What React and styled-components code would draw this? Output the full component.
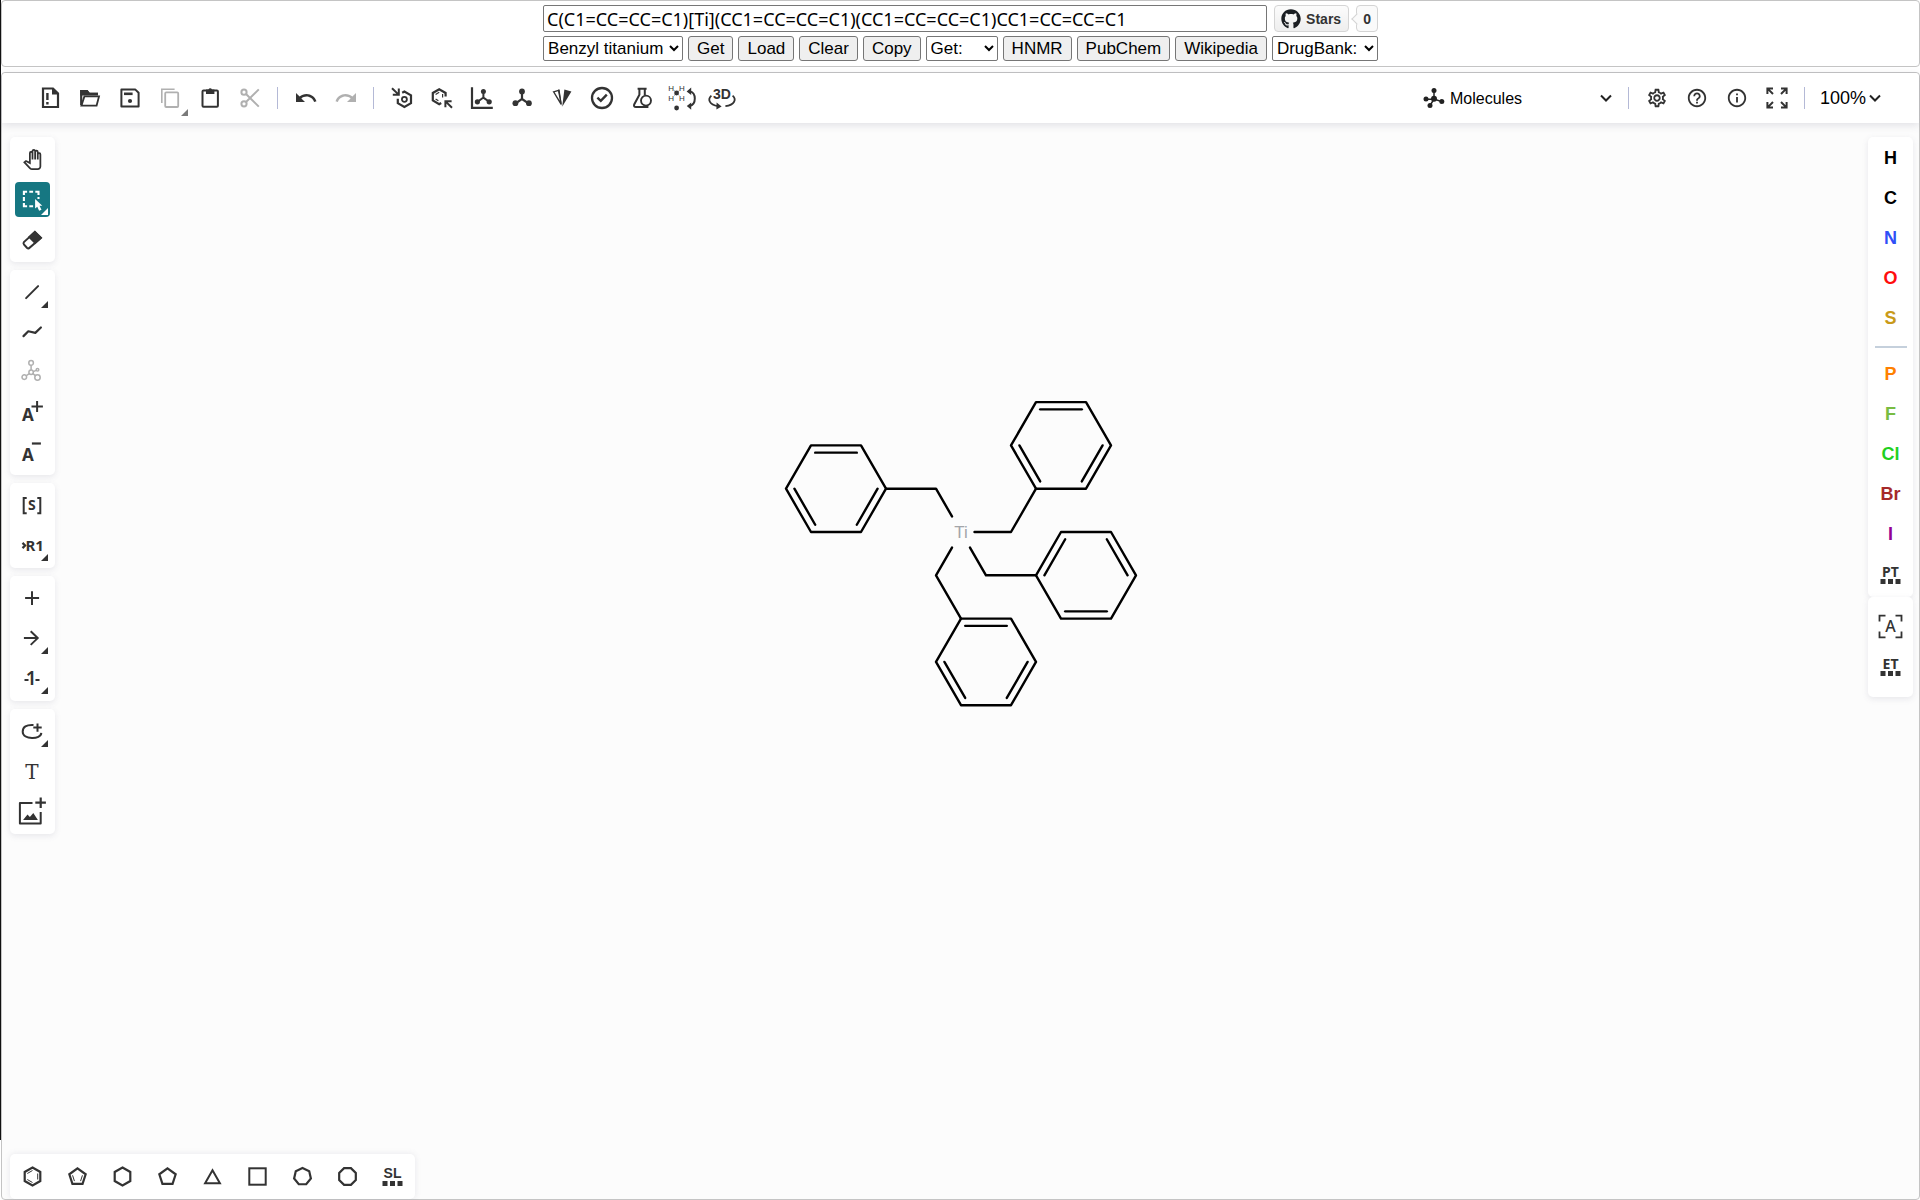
import { useState } from "react";
import styled, { createGlobalStyle } from "styled-components";
import {
  MdHelpOutline,
  MdInfoOutline,
  MdOutlinePanTool,
  MdOutlineSettings,
} from "react-icons/md";
import { FaGithub } from "react-icons/fa";

const ink = "#333333";

const GlobalStyle = createGlobalStyle`
  * {
    box-sizing: border-box;
  }

  body {
    margin: 0;
    background: #ffffff;
    font-family: "Liberation Sans", Arial, sans-serif;
  }
`;

const Page = styled.div`
  display: flex;
  flex-direction: column;
  gap: 5px;
  min-height: 100vh;
  padding-left: 1px;
  background: linear-gradient(#111111, #111111) left top / 1px calc(100% - 60px)
    no-repeat;
`;

const Frame = styled.div`
  display: flex;
  flex-direction: column;
  flex-grow: ${(props) => (props.$grow ? 1 : 0)};
  border: 1px solid #c4c4c4;
  border-radius: 4px;
  background: ${(props) => (props.$grow ? "#fcfcfc" : "#ffffff")};
`;

/* ---------- form above the editor ---------- */

const Form = styled.form`
  display: flex;
  flex-direction: column;
  gap: 4px;
  align-self: center;
  padding: 4px 0 5px;
`;

const FormRow = styled.div`
  display: flex;
  align-items: center;
  gap: 5px;
`;

const SmilesInput = styled.input`
  flex: 1;
  height: 27px;
  padding: 0 3px;
  border: 1px solid #767676;
  border-radius: 2px;
  font-family: "Noto Sans", sans-serif;
  font-size: 18px;
`;

const FormButton = styled.button`
  height: 25px;
  padding: 0 8px;
  border: 1px solid #767676;
  border-radius: 3px;
  background: #efefef;
  color: #000000;
  font-family: inherit;
  font-size: 17px;
  line-height: 20px;
`;

const FormSelect = styled.select`
  width: ${(props) => props.$width}px;
  height: 25px;
  border: 1px solid #767676;
  border-radius: 2px;
  background-color: #ffffff;
  color: #000000;
  font-family: inherit;
  font-size: 17px;
`;

const Github = styled.div`
  display: flex;
  gap: 7px;
  padding-left: 2px;
`;

const GithubLink = styled.a`
  display: flex;
  align-items: center;
  gap: 5px;
  height: 27px;
  padding: 0 7px 0 6px;
  border: 1px solid #d5d5d5;
  border-radius: 4px;
  background: linear-gradient(#fcfcfc, #eeeeee);
  color: #333333;
  font-size: 14px;
  font-weight: bold;
  text-decoration: none;
`;

const GithubCount = styled.a`
  position: relative;
  display: flex;
  align-items: center;
  height: 27px;
  padding: 0 6px;
  border: 1px solid #d4d4d4;
  border-radius: 4px;
  background: #fafafa;
  color: #333333;
  font-size: 14px;
  font-weight: bold;
  text-decoration: none;

  &::before {
    content: "";
    position: absolute;
    left: -4px;
    top: 9px;
    width: 7px;
    height: 7px;
    border-left: 1px solid #d4d4d4;
    border-bottom: 1px solid #d4d4d4;
    background: #fafafa;
    transform: rotate(45deg);
  }
`;

/* ---------- editor ---------- */

const TopBar = styled.header`
  display: flex;
  align-items: center;
  gap: 4px;
  height: 50px;
  padding: 0 37px 0 30px;
  border-radius: 4px 4px 0 0;
  background: #ffffff;
  box-shadow: 0 2px 8px rgba(103, 104, 132, 0.2);
`;

const Divider = styled.span`
  width: 1px;
  height: 22px;
  margin: 0 6px 0 5px;
  background: #b4b9d6;
`;

const ToolButton = styled.button`
  position: relative;
  display: flex;
  align-items: center;
  justify-content: center;
  width: ${(props) => (props.$top ? 36 : 35)}px;
  height: ${(props) => (props.$top ? 36 : 35)}px;
  padding: 0;
  border: none;
  border-radius: 4px;
  background: ${(props) => (props.$active ? "#167782" : "transparent")};
  color: ${(props) => (props.$active ? "#ffffff" : ink)};

  &:disabled {
    color: #b0b0b0;
  }
`;

const Corner = styled.span`
  position: absolute;
  right: ${(props) => (props.$top ? 0 : 2)}px;
  bottom: ${(props) => (props.$top ? 0 : 2)}px;
  width: 7px;
  height: 7px;
  background: ${(props) => (props.$top ? "#7a7a7a" : "currentColor")};
  clip-path: polygon(100% 0, 100% 100%, 0 100%);
`;

const PickerWrap = styled.div`
  display: flex;
  align-items: center;
  gap: ${(props) => (props.$mode ? 3 : 0)}px;
  margin: ${(props) => (props.$mode ? "0 6px 0 auto" : "0 0 0 5px")};
  color: #222222;
`;

const PickerSelect = styled.select`
  width: ${(props) => (props.$mode ? 146 : 48)}px;
  padding: 0;
  border: none;
  appearance: none;
  background: transparent;
  color: #000000;
  font-family: inherit;
  font-size: ${(props) => (props.$mode ? 16 : 18)}px;
`;

const Workspace = styled.div`
  display: flex;
  flex: 1;
  padding: 0 6px 0 8px;
`;

const LeftColumn = styled.nav`
  display: flex;
  flex-direction: column;
  gap: 8px;
  padding-top: 14px;
`;

const Panel = styled.div`
  display: flex;
  flex-direction: column;
  gap: 5px;
  padding: 5px;
  border-radius: 5px;
  background: #ffffff;
  box-shadow: 0 2px 6px rgba(103, 104, 132, 0.14);
`;

const Canvas = styled.main`
  display: flex;
  flex: 1;
  justify-content: center;
  align-items: flex-start;
  padding: 276px 2px 0 0;
`;

const RightColumn = styled.nav`
  display: flex;
  flex-direction: column;
  padding-top: 14px;
`;

const AtomPanel = styled(Panel)`
  padding: 4px 5px 5px;
`;

const ExtraPanel = styled(Panel)`
  padding: 12px 5px 13px;
`;

const AtomButton = styled(ToolButton)`
  color: ${(props) => props.$color};
  font-family: inherit;
  font-size: 18px;
  font-weight: bold;
`;

const AtomRule = styled.hr`
  width: 32px;
  height: 2px;
  margin: 5px auto 4px;
  border: none;
  background: #c5d0dc;
`;

const TemplateBar = styled.footer`
  display: flex;
  align-self: flex-start;
  gap: 10px;
  height: 45px;
  margin-left: 8px;
  padding: 5px;
  border-radius: 5px;
  background: #ffffff;
  box-shadow: 0 0 6px rgba(103, 104, 132, 0.14);
`;

// every drawing has its origin in the middle of the icon
function Icon({ size = 31, children }) {
  return (
    <svg
      width={size}
      height={size}
      viewBox={`${-size / 2} ${-size / 2} ${size} ${size}`}
      fill="none"
      stroke="currentColor"
      strokeWidth="2"
      overflow="visible"
      aria-hidden="true"
    >
      {children}
    </svg>
  );
}

function Label({ x = 0, y, size, weight = "bold", family = "Noto Sans", children }) {
  return (
    <text
      x={x}
      y={y}
      fontSize={size}
      fontWeight={weight}
      fontFamily={`"${family}", sans-serif`}
      textAnchor="middle"
      fill="currentColor"
      stroke="none"
    >
      {children}
    </text>
  );
}

function ring(n, r, start = -90, cx = 0, cy = 0) {
  return Array.from({ length: n }, (_, i) => {
    const angle = ((start + (360 / n) * i) * Math.PI) / 180;
    return [cx + r * Math.cos(angle), cy + r * Math.sin(angle)];
  });
}

const toPoints = (list) => list.map((p) => p.join(",")).join(" ");

function Shape({ n, r, start, cx, cy, width = 2.2 }) {
  return <polygon points={toPoints(ring(n, r, start, cx, cy))} strokeWidth={width} />;
}

// short lines inside a ring, one for each double bond
function InnerBonds({ n, r, start, cx = 0, cy = 0, edges, width = 1 }) {
  const inner = ring(n, r, start, cx, cy);
  return edges.map((e) => (
    <line
      key={e}
      x1={inner[e][0]}
      y1={inner[e][1]}
      x2={inner[(e + 1) % n][0]}
      y2={inner[(e + 1) % n][1]}
      strokeWidth={width}
    />
  ));
}

function Blocks() {
  return (
    <path d="M-10 4.5h5v5h-5zM-2.5 4.5h5v5h-5zM5 4.5h5v5h-5z" fill="currentColor" stroke="none" />
  );
}

function Chevron() {
  return (
    <svg width="14" height="12" viewBox="0 0 14 12" fill="none" stroke="currentColor" strokeWidth="2">
      <path d="M2 3.5l5 5 5-5" />
    </svg>
  );
}

const icons = {
  clear: (
    <>
      <path d="M-7 -9.5H3L8 -4.5V9H-7z" strokeWidth="2.2" />
      <path d="M2 -10V-3.5H8.5z" fill="currentColor" stroke="none" />
      <path d="M-2.6 -5V2M-2.6 4V6.4" strokeWidth="2.4" />
    </>
  ),
  open: (
    <>
      <path d="M-8.8 7V-6.8H-3L-1 -4.2H8" strokeWidth="2.2" />
      <path d="M-9.8 -7.9H-2.6L-.2 -5.2H8V-2.6H-9.8z" fill="currentColor" stroke="none" />
      <path d="M-5.6 -1.6H9L6.6 7.6H-8.6z" strokeWidth="1.8" />
    </>
  ),
  save: (
    <>
      <path d="M-8.6 -8.4H5.4L8.6 -5.2V8.6H-8.6z" strokeLinejoin="round" />
      <path d="M-6 -4.2H2.6" strokeWidth="2.6" />
      <circle cx="0" cy="3" r="2.1" fill="currentColor" stroke="none" />
    </>
  ),
  copy: (
    <>
      <path d="M-8.2 5V-8.8H4.6" strokeWidth="1.6" />
      <rect x="-4.8" y="-5.6" width="13" height="14.6" strokeWidth="1.8" rx="1" />
    </>
  ),
  paste: (
    <>
      <rect x="-7.5" y="-7.6" width="15.4" height="16.4" rx="1" />
      <path d="M-4 -8.6H-1.6A2 2 0 0 1 2 -8.6H4.4V-4H-4z" fill="currentColor" stroke="none" />
    </>
  ),
  cut: (
    <>
      <circle cx="-6" cy="-5.8" r="2.6" />
      <circle cx="-6" cy="5.8" r="2.6" />
      <path d="M-4 -4L8.8 8.6M-4 4L8.8 -8.6" />
    </>
  ),
  undo: (
    <path
      transform="translate(-12 -12)"
      d="M12.5 8c-2.65 0-5.05.99-6.9 2.6L2 7v9h9l-3.62-3.62c1.39-1.16 3.16-1.88 5.12-1.88 3.54 0 6.55 2.31 7.6 5.5l2.37-.78C21.08 11.03 17.15 8 12.5 8z"
      fill="currentColor"
      stroke="none"
    />
  ),
  redo: (
    <path
      transform="translate(12 -12) scale(-1 1)"
      d="M12.5 8c-2.65 0-5.05.99-6.9 2.6L2 7v9h9l-3.62-3.62c1.39-1.16 3.16-1.88 5.12-1.88 3.54 0 6.55 2.31 7.6 5.5l2.37-.78C21.08 11.03 17.15 8 12.5 8z"
      fill="currentColor"
      stroke="none"
    />
  ),
  layout: (
    <>
      <path d="M-4.2 .8V5.2L2.4 9L9 5.2V-2.6L2.4 -6.4L.2 -5.2" strokeWidth="2.2" />
      <circle cx="2.4" cy="1.3" r="2.5" strokeWidth="1.8" />
      <path d="M-10 -9.8L-3.6 -3.6M-3.2 -9.4V-3.2H-9.2" />
    </>
  ),
  clean: (
    <>
      <path d="M3.6 -1.6V-5L-2.8 -8.8L-9.2 -5V2.4L-2.8 6.2L-.8 5" strokeWidth="2.2" />
      <path d="M-6.4 -3.6L-2.8 -5.8M-6.4 1L-3.6 2.8M.6 -4V-.6" strokeWidth="1.2" />
      <path d="M10 9.8L3.8 3.6M3.4 9.2V3.2H9.6" />
    </>
  ),
  aromatize: (
    <>
      <path d="M-10 -10.8V9.8H10.8" strokeWidth="2.2" />
      <path d="M1.4 -6.5V-.4L-4.4 3.8M1.4 -.4L7.2 3.8" />
      <g fill="currentColor" stroke="none">
        <circle cx="1.4" cy="-6.6" r="2.5" />
        <circle cx="-4.6" cy="3.8" r="2.6" />
        <circle cx="7.2" cy="3.8" r="2.6" />
      </g>
    </>
  ),
  dearomatize: (
    <>
      <path d="M0 -6V1L-6.6 5.6M0 1L6.8 5.6" strokeWidth="2.2" />
      <g fill="currentColor" stroke="none">
        <circle cx="0" cy="-6.6" r="2.9" />
        <circle cx="-6.6" cy="5.2" r="2.9" />
        <circle cx="6.9" cy="5.2" r="2.9" />
      </g>
    </>
  ),
  cip: (
    <>
      <path d="M-8.4 -6.2L-3.4 -7.6L-.8 6.4z" strokeWidth="1.4" />
      <path d="M2.4 -8.4L9.4 -6.4L.2 8.8z" fill="currentColor" stroke="none" />
      <path d="M-4 -8.2L-2.4 -8.4L0 8.6z" fill="currentColor" stroke="none" />
    </>
  ),
  check: (
    <>
      <circle r="10" strokeWidth="2.3" />
      <path d="M-4.6 -.4L-1.2 2.8L4.8 -3.4" strokeWidth="2.4" />
    </>
  ),
  calculate: (
    <>
      <path d="M-4.4 -9.2H4.6M-2.6 -9V-3.2L-7.8 6.4Q-8.6 9 -6 9H6.4M2.8 -9V-3" />
      <circle cx="4" cy="2.6" r="5" strokeWidth="1.9" />
    </>
  ),
  hydrogens: (
    <>
      <Label x={-10.8} y={-7.4} size={8} weight="normal" family="Liberation Sans">H</Label>
      <Label x={-0.2} y={-7.4} size={8} weight="normal" family="Liberation Sans">H</Label>
      <Label x={-10.8} y={2.8} size={8} weight="normal" family="Liberation Sans">H</Label>
      <Label x={-0.2} y={2.8} size={8} weight="normal" family="Liberation Sans">H</Label>
      <path d="M-8 -7.6L-2.6 -2.4M-2.6 -7.6L-8 -2.4" strokeWidth="0.5" />
      <circle cx="-5.4" cy="-5" r="2.4" fill="currentColor" stroke="none" />
      <circle cx="-5.4" cy="10" r="2.4" fill="currentColor" stroke="none" />
      <path d="M8 -6.6Q12.8 -5.4 12.8 .6Q12.8 6.6 8 8" />
      <path d="M4.6 -6.4L9.2 -10.4V-3zM4.8 8L9.2 4.4V11.8z" fill="currentColor" stroke="none" />
    </>
  ),
  view3d: (
    <>
      <Label x={0} y={0.6} size={14} family="Liberation Sans">3D</Label>
      <path d="M-10.6 -2.4C-14.6 1 -13 7 -4 8.2M10.6 -2.4C14.6 1 13 7 3.4 8.2" strokeWidth="1.8" />
      <path d="M-5.4 4.4L-.4 8.6L-5.6 11.4z" fill="currentColor" stroke="none" />
    </>
  ),
  molecules: (
    <>
      <path d="M0 -8V1L-8 1.2M0 1L7.6 3.6M0 1L-4 7.6" strokeWidth="1.5" />
      <g fill="currentColor" stroke="none">
        <circle cx="0" cy=".8" r="3" />
        <circle cx="0" cy="-7.6" r="2.5" />
        <circle cx="-8" cy="1" r="2.5" />
        <circle cx="7.8" cy="3.6" r="2.5" />
        <circle cx="-4" cy="7.4" r="2.5" />
      </g>
    </>
  ),
  fullscreen: (
    <path d="M-9.6 -4V-9.6H-4M-9.6 -9.6L-4 -4M9.6 -4V-9.6H4M9.6 -9.6L4 -4M-9.6 4V9.6H-4M-9.6 9.6L-4 4M9.6 4V9.6H4M9.6 9.6L4 4" />
  ),
  select: (
    <>
      <path
        d="M-8.6 -4.6V-7.8H-5.4M-3.2 -7.8H.6M2.8 -7.8H6V-4.6M-8.6 -2.4V1.4M-8.6 3.6V6.8H-5.4M-3.2 6.8H.6M6 -2.4V-.4"
        strokeWidth="2.1"
      />
      <path d="M2.6 -.6L9.8 6.2H7L9 10.2L6.6 11.2L4.8 7.2L2.6 9z" fill="currentColor" stroke="none" />
    </>
  ),
  erase: (
    <>
      <path d="M2.4 -7.4L8.4 -1.6L-3.6 8.8Q-4.6 9.2 -5.6 8.2L-8.6 4.8Q-9.4 3.6 -8.6 2.6z" />
      <path d="M2.4 -9L9.8 -1.8L2.6 4.8L-4.6 -2.4z" fill="currentColor" stroke="none" />
    </>
  ),
  bond: <path d="M-6.4 5.6L5.6 -6.4" strokeLinecap="round" />,
  chain: <path d="M-9 3.6L-4.2 -1.2L2.8 .4L8.4 -5" strokeWidth="2.2" strokeLinecap="round" strokeLinejoin="round" />,
  stereo: (
    <g strokeWidth="1.5">
      <circle cx="-1.4" cy="-9.6" r="2.3" />
      <circle cx="-1.4" cy="-.2" r="2.2" />
      <circle cx="-8.2" cy="4.6" r="2.3" />
      <circle cx="5" cy="5" r="2.7" />
      <circle cx="5" cy="-2.8" r="1.3" />
      <path d="M-1.4 -7.2V-2.4M-3.2 1.2L-6.2 3.2M.4 1.2L2.8 3.2M.8 -.8L3.6 -2.2" />
    </g>
  ),
  chargePlus: (
    <>
      <Label x={-4.6} y={8.6} size={17}>A</Label>
      <path d="M4.6 -11.6V-.4M-1 -6H10.4" />
    </>
  ),
  chargeMinus: (
    <>
      <Label x={-4.6} y={8.6} size={17}>A</Label>
      <path d="M-.6 -9H8.4" strokeWidth="2.2" />
    </>
  ),
  sgroup: (
    <>
      <path d="M-5.8 -7.6H-8.8V7.8H-5.8M4.8 -7.6H7.8V7.8H4.8" />
      <Label x={-0.6} y={4.8} size={14}>S</Label>
    </>
  ),
  rgroup: (
    <>
      <path d="M-10 -2.6L-7.4 0L-10 2.6" strokeWidth="2.2" />
      <Label x={2.2} y={5.2} size={15}>R1</Label>
    </>
  ),
  plus: <path d="M-.5 -7.2V6.6M-7.4 -.4H6.6" />,
  arrow: <path d="M-8.6 -.4H5.2M-1.8 -7.2L5.2 -.4L-1.8 6.4" />,
  mapping: (
    <>
      <Label x={-1.4} y={6.8} size={19} weight="600">1</Label>
      <path d="M-8 1.6H-4M3 1.6H7" />
    </>
  ),
  shape: (
    <>
      <path d="M1 -6.4Q-9.8 -7 -9.8 .2C-9.8 8.4 8.6 8.4 8.8 1.4" />
      <path d="M5 -8V.2M.8 -4H9.2" />
    </>
  ),
  text: <Label x={-0.6} y={7.6} size={20} weight="normal" family="DejaVu Serif">T</Label>,
  image: (
    <>
      <path d="M0 -8.6H-12.6V12H8.2V.6" strokeLinejoin="round" />
      <path d="M8.2 -14V-3.4M2.8 -8.8H13.4" strokeWidth="2.2" />
      <path d="M-9.4 8.6L-5 3L-2.6 5.6L.8 1.6L5.4 8.6z" fill="currentColor" stroke="none" />
    </>
  ),
  benzene: (
    <>
      <Shape n={6} r={9} />
      <InnerBonds n={6} r={6} edges={[1, 3, 5]} />
    </>
  ),
  cyclopentadiene: (
    <>
      <Shape n={5} r={8.6} cy={0.4} />
      <InnerBonds n={5} r={5.2} cy={0.4} edges={[1, 3]} />
    </>
  ),
  cyclohexane: <Shape n={6} r={9} />,
  cyclopentane: <Shape n={5} r={8.6} cy={0.4} />,
  cyclopropane: <path d="M0 -6.2L7.4 6.8H-7.4z" />,
  cyclobutane: <rect x="-8.2" y="-8.2" width="16.4" height="16.4" />,
  cycloheptane: <Shape n={7} r={8.6} />,
  cyclooctane: <Shape n={8} r={9} start={22.5} />,
  library: (
    <>
      <Label y={1.4} size={14} family="Liberation Sans">SL</Label>
      <Blocks />
    </>
  ),
  periodic: (
    <>
      <Label y={2.2} size={14}>PT</Label>
      <Blocks />
    </>
  ),
  anyAtom: (
    <>
      <path d="M-11 -5V-10.8H-5M5 -10.8H11V-5M-11 5V10.8H-5M5 10.8H11V5" strokeWidth="1.8" />
      <Label y={5.8} size={16} weight="500">A</Label>
    </>
  ),
  extended: (
    <>
      <Label y={2.2} size={14}>ET</Label>
      <Blocks />
    </>
  ),
};

const topGroups = [
  [
    { id: "clear", title: "Clear Canvas" },
    { id: "open", title: "Open" },
    { id: "save", title: "Save As" },
    { id: "copy", title: "Copy", disabled: true, more: true },
    { id: "paste", title: "Paste" },
    { id: "cut", title: "Cut", disabled: true },
  ],
  [
    { id: "undo", title: "Undo" },
    { id: "redo", title: "Redo", disabled: true },
  ],
  [
    { id: "layout", title: "Layout" },
    { id: "clean", title: "Clean Up" },
    { id: "aromatize", title: "Aromatize" },
    { id: "dearomatize", title: "Dearomatize" },
    { id: "cip", title: "Calculate CIP" },
    { id: "check", title: "Check Structure" },
    { id: "calculate", title: "Calculated Values" },
    { id: "hydrogens", title: "Add/Remove explicit hydrogens" },
    { id: "view3d", title: "3D Viewer" },
  ],
];

const leftGroups = [
  [
    { id: "hand", title: "Hand Tool" },
    { id: "select", title: "Rectangle Selection", more: true },
    { id: "erase", title: "Erase" },
  ],
  [
    { id: "bond", title: "Single Bond", more: true },
    { id: "chain", title: "Chain" },
    { id: "stereo", title: "Stereochemistry", disabled: true },
    { id: "chargePlus", title: "Charge Plus" },
    { id: "chargeMinus", title: "Charge Minus" },
  ],
  [
    { id: "sgroup", title: "S-Group" },
    { id: "rgroup", title: "R-Group Label Tool", more: true },
  ],
  [
    { id: "plus", title: "Reaction Plus Tool" },
    { id: "arrow", title: "Arrow Open Angle Tool", more: true },
    { id: "mapping", title: "Reaction Mapping Tool", more: true },
  ],
  [
    { id: "shape", title: "Shape Ellipse", more: true },
    { id: "text", title: "Add text" },
    { id: "image", title: "Add Image" },
  ],
];

const mainAtoms = [
  { name: "H", color: "#000000" },
  { name: "C", color: "#000000" },
  { name: "N", color: "#304ff7" },
  { name: "O", color: "#ff0d0d" },
  { name: "S", color: "#c99a19" },
];

const moreAtoms = [
  { name: "P", color: "#ff8000" },
  { name: "F", color: "#78bc42" },
  { name: "Cl", color: "#1fd01f" },
  { name: "Br", color: "#a62929" },
  { name: "I", color: "#940094" },
];

const templates = [
  { id: "benzene", title: "Benzene" },
  { id: "cyclopentadiene", title: "Cyclopentadiene" },
  { id: "cyclohexane", title: "Cyclohexane" },
  { id: "cyclopentane", title: "Cyclopentane" },
  { id: "cyclopropane", title: "Cyclopropane" },
  { id: "cyclobutane", title: "Cyclobutane" },
  { id: "cycloheptane", title: "Cycloheptane" },
  { id: "cyclooctane", title: "Cyclooctane" },
  { id: "library", title: "Structure Library" },
];

// ring centres relative to the titanium atom, and the edges with a double bond
const phenyls = [
  { cx: -125, cy: -43.3, edges: [0, 2, 4] },
  { cx: 100, cy: -86.6, edges: [0, 2, 4] },
  { cx: 125, cy: 43.3, edges: [1, 3, 5] },
  { cx: 25, cy: 129.9, edges: [0, 2, 4] },
];

function Molecule() {
  return (
    <svg
      width="356"
      height="310"
      viewBox="-178 -133 356 310"
      fill="none"
      stroke="#000000"
      strokeWidth="2.4"
      strokeLinecap="round"
      strokeLinejoin="round"
      role="img"
      aria-label="Benzyl titanium"
    >
      {phenyls.map((p) => (
        <g key={p.cx}>
          <Shape n={6} r={50} start={0} cx={p.cx} cy={p.cy} width={2.4} />
          <InnerBonds
            n={6}
            r={41.6}
            start={0}
            cx={p.cx}
            cy={p.cy}
            edges={p.edges}
            width={2.4}
          />
        </g>
      ))}
      <path d="M-9 -15.6L-25 -43.3H-75M13.5 0H50L75 -43.3M-9 15.6L-25 43.3L0 86.6M9 15.6L25 43.3H75" />
      <text
        y="6"
        textAnchor="middle"
        fontFamily='"Liberation Sans", Arial, sans-serif'
        fontSize="17"
        fill="#a3a5a9"
        stroke="none"
      >
        Ti
      </text>
    </svg>
  );
}

function Tool({ tool, top, active, onPick }) {
  return (
    <ToolButton
      type="button"
      $top={top}
      $active={active}
      disabled={tool.disabled}
      aria-label={tool.title}
      onClick={onPick}
    >
      {tool.id === "hand" ? (
        <MdOutlinePanTool size={21} />
      ) : (
        <Icon size={top ? 30 : 31}>{icons[tool.id]}</Icon>
      )}
      {tool.more && <Corner $top={top} />}
    </ToolButton>
  );
}

export default function App() {
  const [smiles, setSmiles] = useState(
    "C(C1=CC=CC=C1)[Ti](CC1=CC=CC=C1)(CC1=CC=CC=C1)CC1=CC=CC=C1"
  );
  const [tool, setTool] = useState("select");

  return (
    <>
      <GlobalStyle />
      <Page>
        <Frame>
          <Form onSubmit={(e) => e.preventDefault()}>
            <FormRow>
              <SmilesInput
                type="text"
                aria-label="SMILES"
                value={smiles}
                onChange={(e) => setSmiles(e.target.value)}
              />
              <Github>
                <GithubLink href="#stars">
                  <FaGithub size={20} color="#1b1f23" />
                  Stars
                </GithubLink>
                <GithubCount href="#stargazers">0</GithubCount>
              </Github>
            </FormRow>
            <FormRow>
              <FormSelect $width={140} aria-label="Compound">
                <option>Benzyl titanium</option>
              </FormSelect>
              <FormButton>Get</FormButton>
              <FormButton>Load</FormButton>
              <FormButton onClick={() => setSmiles("")}>Clear</FormButton>
              <FormButton>Copy</FormButton>
              <FormSelect $width={72} aria-label="Get">
                <option>Get:</option>
              </FormSelect>
              <FormButton>HNMR</FormButton>
              <FormButton>PubChem</FormButton>
              <FormButton>Wikipedia</FormButton>
              <FormSelect $width={106} aria-label="DrugBank">
                <option>DrugBank:</option>
              </FormSelect>
            </FormRow>
          </Form>
        </Frame>

        <Frame $grow>
          <TopBar>
            {topGroups.map((group, i) => [
              i > 0 && <Divider key={`divider-${i}`} />,
              ...group.map((item) => <Tool key={item.id} tool={item} top />),
            ])}
            <PickerWrap $mode>
              <Icon size={26}>{icons.molecules}</Icon>
              <PickerSelect $mode aria-label="Mode">
                <option>Molecules</option>
              </PickerSelect>
              <Chevron />
            </PickerWrap>
            <Divider />
            <ToolButton $top aria-label="Settings">
              <MdOutlineSettings size={22} />
            </ToolButton>
            <ToolButton $top aria-label="Help">
              <MdHelpOutline size={22} />
            </ToolButton>
            <ToolButton $top aria-label="About">
              <MdInfoOutline size={22} />
            </ToolButton>
            <ToolButton $top aria-label="Fullscreen mode">
              <Icon size={30}>{icons.fullscreen}</Icon>
            </ToolButton>
            <Divider />
            <PickerWrap>
              <PickerSelect aria-label="Zoom">
                <option>100%</option>
              </PickerSelect>
              <Chevron />
            </PickerWrap>
          </TopBar>

          <Workspace>
            <LeftColumn>
              {leftGroups.map((group) => (
                <Panel key={group[0].id}>
                  {group.map((item) => (
                    <Tool
                      key={item.id}
                      tool={item}
                      active={tool === item.id}
                      onPick={() => setTool(item.id)}
                    />
                  ))}
                </Panel>
              ))}
            </LeftColumn>
            <Canvas>
              <Molecule />
            </Canvas>
            <RightColumn>
              <AtomPanel>
                {mainAtoms.map((atom) => (
                  <AtomButton key={atom.name} $color={atom.color}>
                    {atom.name}
                  </AtomButton>
                ))}
                <AtomRule />
                {moreAtoms.map((atom) => (
                  <AtomButton key={atom.name} $color={atom.color}>
                    {atom.name}
                  </AtomButton>
                ))}
                <Tool tool={{ id: "periodic", title: "Periodic Table" }} />
              </AtomPanel>
              <ExtraPanel>
                <Tool tool={{ id: "anyAtom", title: "Any atom" }} />
                <Tool tool={{ id: "extended", title: "Extended Table" }} />
              </ExtraPanel>
            </RightColumn>
          </Workspace>

          <TemplateBar>
            {templates.map((item) => (
              <Tool key={item.id} tool={item} />
            ))}
          </TemplateBar>
        </Frame>
      </Page>
    </>
  );
}
